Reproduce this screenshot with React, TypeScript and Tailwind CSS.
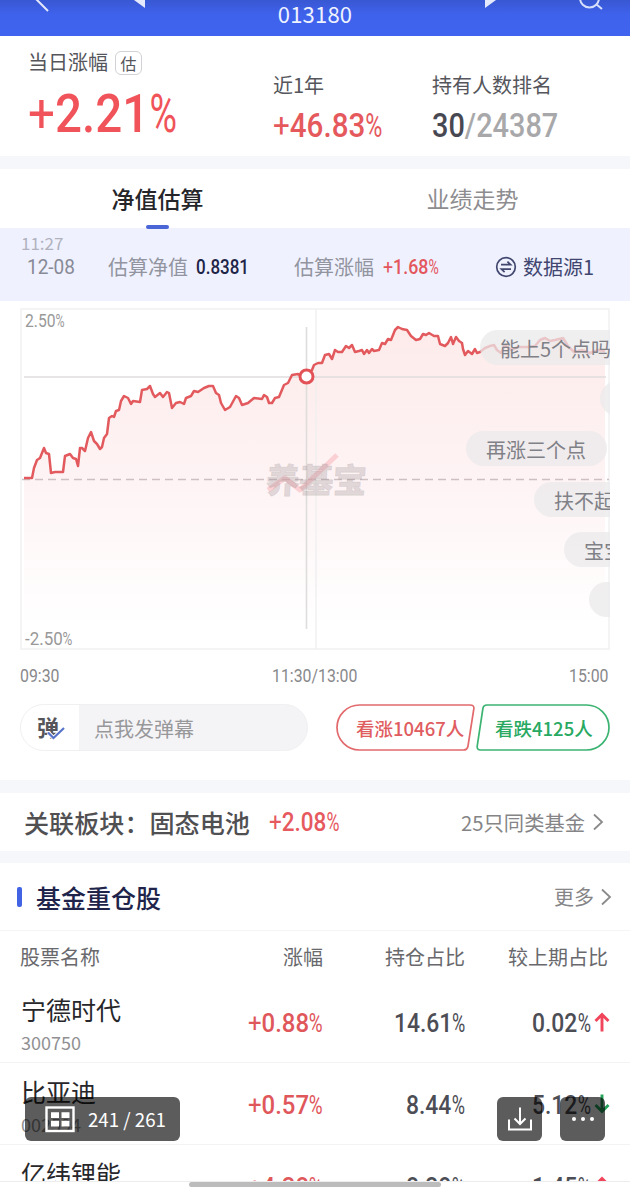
import React from "react";

const CJK = "font-['Noto_Sans_CJK_SC','Noto_Sans',sans-serif]";
const DIN = "font-[Roboto,'Noto_Sans_CJK_SC',sans-serif]";

/** Condensed figure: keeps a fixed box and squeezes the digits into it. */
function Num({ box, cls, children }: { box: string; cls: string; children: React.ReactNode }) {
  let body = children;
  if (typeof children === "string" && children.endsWith("%")) {
    const plus = children.startsWith("+");
    body = (
      <>
        {plus && <span className="font-normal">+</span>}
        {children.slice(plus ? 1 : 0, -1)}
        <span className="inline-block w-[0.58em] origin-left scale-x-[.79] font-normal">%</span>
      </>
    );
  }
  return (
    <span className={`block shrink-0 ${box}`}>
      <span className={`block w-max origin-left whitespace-nowrap leading-none ${DIN} ${cls}`}>{body}</span>
    </span>
  );
}

const LINE =
  "24,478 32,478 34,468 37,460 40,458 44,448 46,453 49,454 51,473 55,472 63,472 65,456 70,454 73,458 76,459 78,466 80,448 82,448 85,451 88,438 91,432 94,441 97,444 100,449 102,447 104,438 107,434 109,418 112,416 114,417 116,411 119,410 121,401 124,396 128,398 131,404 133,401 140,402 142,390 147,389 150,386 153,394 155,397 160,393 163,397 167,392 169,393 172,408 176,403 180,402 184,404 186,398 191,396 194,391 198,392 204,388 209,386 213,386 216,393 219,395 221,403 225,410 230,407 236,396 239,398 242,405 248,403 254,398 262,399 264,395 267,397 269,403 272,403 275,398 279,397 284,385 288,383 292,375 298,374 302,377 306,376 312,370 314,365 318,363 322,363 325,355 329,354 332,359 335,350 338,352 342,352 346,346 349,348 352,345 355,352 359,351 362,350 364,354 367,350 369,353 372,349 374,351 379,350 382,343 385,344 388,339 391,340 395,330 398,327 402,329 407,330 411,336 416,340 420,339 423,334 426,335 429,333 434,336 438,336 440,344 445,346 448,343 451,337 453,344 456,337 459,341 462,343 463,349 465,355 468,351 472,354 475,349 477,353 480,352 485,348 490,346 494,345 497,350 501,353 505,345 511,350 518,347 528,347 535,346 540,340 545,338 550,341 555,340 563,338 568,346 574,352 582,350 590,353 598,350 605,351";

function Chart() {
  return (
    <div className="relative mx-[20px] mt-[7px] h-[342px] overflow-hidden">
      <svg className="block h-full w-full" viewBox="20 308 590 342">
        <defs>
          <linearGradient id="area" x1="0" y1="325" x2="0" y2="625" gradientUnits="userSpaceOnUse">
            <stop offset="0" stopColor="#fdebea" />
            <stop offset="0.5" stopColor="#fef3f4" />
            <stop offset="1" stopColor="#ffffff" />
          </linearGradient>
        </defs>
        <polygon points={`24,649 ${LINE} 605,649`} fill="url(#area)" />
        <rect x="21" y="309" width="588" height="340" fill="none" stroke="#f2f2f3" strokeWidth="1.6" />
        <path d="M316 309V649" stroke="#efefef" strokeWidth="1.4" />
        <path d="M24 377H606" stroke="#dfdcdc" strokeWidth="1.3" />
        <path d="M306.5 327V629" stroke="#dfdcdc" strokeWidth="1.6" />
        <path d="M22 479.5H609" stroke="#cdbfc2" strokeWidth="1.3" strokeDasharray="8 5" />
        <polyline points={LINE} fill="none" stroke="#e25a5d" strokeWidth="2.5" strokeLinejoin="round" />
        <path d="M268 490L285 478L300 490L337 455" fill="none" stroke="#f8b5ba" strokeWidth="5" strokeLinejoin="round" opacity=".55" />
        <circle cx="306.5" cy="376.5" r="6.5" fill="#fff" stroke="#e25257" strokeWidth="3" />
      </svg>
      <Num box="absolute left-[5px] top-[4px] w-[40px]" cls="scale-x-[.87] text-[18px] text-[#999]">2.50%</Num>
      <Num box="absolute left-[5px] top-[322px] w-[48px]" cls="scale-x-[.94] text-[18px] text-[#999]">-2.50%</Num>
      <div className="absolute left-[246px] top-[151px] -skew-x-3 whitespace-nowrap text-[34px] font-black leading-[40px] tracking-[-0.5px] text-[#8a7f84]/25 [-webkit-text-stroke:1px_rgb(138_127_132/0.15)]">
        养基宝
      </div>
      <Pill cls="left-[460px] top-[22px] w-[160px]">能上5个点吗</Pill>
      <Pill cls="left-[580px] top-[73px] w-[80px]" />
      <Pill cls="left-[446px] top-[123px] w-[141px]">再涨三个点</Pill>
      <Pill cls="left-[514px] top-[174px] w-[141px]">扶不起</Pill>
      <Pill cls="left-[544px] top-[224px] w-[141px]">宝宝</Pill>
      <Pill cls="left-[569px] top-[274px] w-[141px]" />
    </div>
  );
}

function Pill({ cls, children }: { cls: string; children?: React.ReactNode }) {
  return (
    <div className={`absolute h-[35px] whitespace-nowrap rounded-full bg-[#ebe9eb]/75 pl-[20px] text-[20px] leading-[37px] text-[#808087] ${cls}`}>
      {children}
    </div>
  );
}

function Chevron() {
  return (
    <svg className="h-[18px] w-[12px]" viewBox="0 0 12 18" fill="none" stroke="#8a8a8a" strokeWidth="1.8">
      <path d="M2 1.5L10 9L2 16.5" />
    </svg>
  );
}

function Arrow({ up }: { up: boolean }) {
  return (
    <svg className="h-[20px] w-[16px]" viewBox="0 0 16 20" fill="none" stroke={up ? "#f0455a" : "#22a55b"} strokeWidth="2.9">
      <path d={up ? "M8 19.5V2.5M1.5 9L8 2.5L14.5 9" : "M8 .5V17.5M1.5 11L8 17.5L14.5 11"} />
    </svg>
  );
}

interface Stock {
  name: string;
  code: string;
  change: string;
  weight: string;
  weightBox: string;
  delta: string;
  up: boolean;
}

const STOCKS: Stock[] = [
  { name: "宁德时代", code: "300750", change: "+0.88%", weight: "14.61%", weightBox: "ml-[71px] w-[72px]", delta: "0.02%", up: true },
  { name: "比亚迪", code: "002594", change: "+0.57%", weight: "8.44%", weightBox: "ml-[83px] w-[60px]", delta: "5.12%", up: false },
  { name: "亿纬锂能", code: "300014", change: "+4.28%", weight: "8.28%", weightBox: "ml-[83px] w-[60px]", delta: "1.45%", up: true },
];

function StockRow({ s }: { s: Stock }) {
  return (
    <div className="flex h-[82px] items-start border-b border-[#f3f3f4] pl-[21px]">
      <div className="w-[227px] pt-[10px]">
        <div className="text-[25px] leading-[37px] text-[#27272b]">{s.name}</div>
        <div className="mt-px text-[18px] leading-[26px] text-[#909093]">{s.code}</div>
      </div>
      <div className="flex pt-[29px]">
        <Num box="w-[75px]" cls="scale-x-[.92] text-[26px] font-medium text-[#e0575b]">{s.change}</Num>
        <Num box={s.weightBox} cls="scale-x-[.88] text-[26px] font-medium text-[#4c4d55]">{s.weight}</Num>
        <Num box="ml-[66px] w-[62px]" cls="scale-x-[.88] text-[26px] font-medium text-[#4c4d55]">{s.delta}</Num>
        <div className="pt-[2px]"><Arrow up={s.up} /></div>
      </div>
    </div>
  );
}

export default function App() {
  return (
    <div className={`relative flex h-[1188px] w-[630px] flex-col overflow-hidden bg-white ${CJK}`}>
      <header className="relative flex h-[36px] shrink-0 items-start justify-center bg-linear-to-b from-[#3857d2] via-[#3f62ec] via-40% to-[#4064ef]">
        <svg className="absolute left-0 top-0 h-[36px] w-[630px]" viewBox="0 0 630 36" fill="none">
          <path d="M34-3L48 11" stroke="#e4e9fb" strokeWidth="2" />
          <path d="M134 0H145V8Z M485 0H496L485 8Z" fill="#e4e9fb" />
          <circle cx="589.5" cy="-2" r="9.5" stroke="#d5defa" strokeWidth="2" />
          <path d="M596 4L602 9" stroke="#d5defa" strokeWidth="2" />
        </svg>
        <span className="text-[22px] leading-[26px] tracking-[0.2px] text-[#eef2ff]">013180</span>
      </header>

      <section className="flex h-[120px] shrink-0 text-[20px] text-[#55565c]">
        <div className="w-[245px] pl-[28px] pt-[11px]">
          <div className="flex h-[30px] items-center">
            <span>当日涨幅</span>
            <span className="ml-[7px] mt-[2px] flex h-[24px] w-[27px] items-center justify-center rounded-[6px] border-[1.5px] border-[#d2d2d6] text-[16px]">估</span>
          </div>
          <Num box="mt-[10px] w-[148px]" cls="scale-x-[.88] text-[54px] font-medium text-[#f0545a]">+2.21%</Num>
        </div>
        <div className="w-[159px] pl-[28px] pt-[34px]">
          <div className="leading-[30px]">近1年</div>
          <Num box="mt-[8px] w-[109px]" cls="scale-x-[.87] text-[34px] font-medium text-[#e5595d]">+46.83%</Num>
        </div>
        <div className="pl-[28px] pt-[34px]">
          <div className="leading-[30px]">持有人数排名</div>
          <Num box="mt-[8px] w-[126px]" cls="scale-x-[.85] text-[34px] font-medium text-[#a8a8aa]">
            <span className="text-[#474852]">30</span>/24387
          </Num>
        </div>
      </section>

      <div className="h-[13px] shrink-0 bg-[#f6f7fa]" />

      <nav className="grid h-[59px] shrink-0 grid-cols-2 text-center text-[23px] leading-[58px]">
        <div className="relative font-medium text-[#26262a]">
          净值估算
          <span className="absolute bottom-[-1px] left-[146px] z-10 h-[4px] w-[23px] rounded-full bg-[#4a65d6]" />
        </div>
        <div className="text-[#8d8d90]">业绩走势</div>
      </nav>

      <section className="h-[73px] shrink-0 bg-[#eff1fe]">
        <div className="pl-[21px] pt-[4px] text-[17px] leading-[22px] text-[#b0b2bd]">11:27</div>
        <div className="mt-px flex h-[24px] items-center text-[20px] text-[#92949f]">
          <Num box="ml-[27px] w-[81px]" cls="scale-x-[.95] text-[20px] text-[#888a96]">12-08</Num>
          <span className="w-[88px]">估算净值</span>
          <Num box="w-[98px]" cls="scale-x-[.85] text-[20px] font-medium text-[#1e2447]">0.8381</Num>
          <span className="w-[89px]">估算涨幅</span>
          <Num box="w-[112px]" cls="scale-x-[.89] text-[20px] font-medium text-[#e4565d]">+1.68%</Num>
          <svg className="h-[22px] w-[22px]" viewBox="0 0 22 22" fill="none" stroke="#41476f" strokeWidth="1.7">
            <circle cx="11" cy="11" r="9.3" />
            <path d="M6 8.6H15.6L12.4 5.600M16 13.200H6.400L9.600 16.200" />
          </svg>
          <span className="ml-[6px] text-[#414670]">数据源1</span>
        </div>
      </section>

      <Chart />

      <div className="mx-[20px] mt-[17px] flex h-[19px] shrink-0 justify-between text-[#88888b]">
        <Num box="w-[41px]" cls="scale-x-[.88] text-[18px]">09:30</Num>
        <Num box="w-[86px]" cls="scale-x-[.88] text-[18px]">11:30/13:00</Num>
        <Num box="w-[41px]" cls="scale-x-[.88] text-[18px]">15:00</Num>
      </div>

      <section className="mt-[18px] flex h-[76px] shrink-0 items-start px-[20px]">
        <div className="flex h-[47px] w-[288px] overflow-hidden rounded-full border border-[#f0f0f2] bg-[#f4f4f6]">
          <div className="relative w-[58px] bg-white pl-[16px] text-[22px] font-bold leading-[43px] text-[#55555a]">
            弹
            <svg className="absolute left-[25px] top-[20px] h-[16px] w-[20px]" viewBox="0 0 20 16" fill="none">
              <path d="M2 7.5L7.5 13L18 3" stroke="#fff" strokeWidth="4" />
              <path d="M2 7.5L7.5 13L18 3" stroke="#5673c9" strokeWidth="2.2" />
            </svg>
          </div>
          <div className="pl-[15px] text-[20px] leading-[47px] text-[#98989b]">点我发弹幕</div>
        </div>
        <div className="relative ml-[28px] h-[47px] w-[139px] text-[18.5px] font-medium leading-[48px] text-[#df5c60]">
          <svg className="absolute inset-0 h-full w-full" viewBox="0 0 139 47" fill="none">
            <path d="M23.500 1H134Q138.500 1 137.800 5L132 42Q131.300 46 127.500 46H23.500A22.500 22.500 0 0 1 23.500 1Z" stroke="#e2696c" strokeWidth="1.7" />
          </svg>
          <span className="relative pl-[20px]">看涨10467人</span>
        </div>
        <div className="relative ml-px h-[47px] w-[134px] text-[18.5px] font-medium leading-[48px] text-[#27a962]">
          <svg className="absolute inset-0 h-full w-full" viewBox="0 0 134 47" fill="none">
            <path d="M110.500 1H11Q7.500 1 6.900 4.500L1.200 42Q.8 46 4.500 46H110.500A22.500 22.500 0 0 0 110.500 1Z" stroke="#3bb371" strokeWidth="1.7" />
          </svg>
          <span className="relative pl-[19px]">看跌4125人</span>
        </div>
      </section>

      <div className="h-[13px] shrink-0 bg-[#f6f7fb]" />

      <section className="flex h-[58px] shrink-0 items-center pl-[24px] pr-[26px]">
        <span className="mt-[2px] w-[245px] whitespace-nowrap text-[25.100px] font-medium text-[#505053]">关联板块：固态电池</span>
        <Num box="w-[70px]" cls="scale-x-[.9] text-[25px] font-medium text-[#e6595e]">+2.08%</Num>
        <span className="ml-auto mr-[7px] text-[20.3px] text-[#858587]">25只同类基金</span>
        <Chevron />
      </section>

      <div className="h-[12px] shrink-0 bg-[#f6f7fb]" />

      <section className="flex h-[68px] shrink-0 items-center border-b border-[#f5f5f6] pl-[17px] pr-[18px]">
        <span className="h-[20px] w-[5px] rounded-[2px] bg-[#4263e4]" />
        <span className="ml-[14px] mt-[2px] text-[25px] font-medium text-[#20244a]">基金重仓股</span>
        <span className="ml-auto mr-[6px] mt-px text-[20px] text-[#858587]">更多</span>
        <Chevron />
      </section>

      <div className="flex h-[50px] shrink-0 items-center pl-[20px] text-[20px] leading-[50px] text-[#69696d]">
        <span className="mt-[2px] w-[222px]">股票名称</span>
        <span className="mt-[2px] w-[81px] text-right">涨幅</span>
        <span className="mt-[2px] w-[142px] text-right">持仓占比</span>
        <span className="mt-[2px] w-[143px] text-right">较上期占比</span>
      </div>

      <div className="h-[200px] shrink-0 overflow-hidden">
        {STOCKS.map((s) => (
          <StockRow key={s.code} s={s} />
        ))}
      </div>
      <footer className="relative h-[7px] shrink-0 border-t border-[#ededee] bg-white pl-[189px]">
        <div className="h-[5px] w-[252px] rounded-full bg-[#bcbcbc]" />
      </footer>

      <div className="absolute left-[25px] top-[1097px] flex h-[44px] w-[155px] items-center rounded-[6px] bg-black/64 pl-[20px] text-white">
        <svg className="h-[27px] w-[30px]" viewBox="0 0 30 27" fill="none" stroke="#fff">
          <rect x="1.500" y="1.500" width="27" height="23.500" strokeWidth="2.400" />
          <path d="M6 6.200H14V12H6ZM16.500 6.200H24.500V12H16.500ZM6 14.800H14V20.500H6ZM16.500 14.800H24.500V20.500H16.500Z" fill="#fff" stroke="none" />
        </svg>
        <span className="ml-[13px] mt-px whitespace-nowrap text-[18.7px]">241 / 261</span>
      </div>
      <div className="absolute left-[497px] top-[1097px] flex h-[44px] w-[45px] items-center justify-center rounded-[6px] bg-black/64">
        <svg className="h-[26px] w-[26px]" viewBox="0 0 26 26" fill="none" stroke="#fff" strokeWidth="2">
          <path d="M13 1.500V17.500M7.500 12.500L13 18L18.500 12.500M2 13.500V23.500H24V13.500" />
        </svg>
      </div>
      <div className="absolute left-[560px] top-[1097px] flex h-[44px] w-[45px] items-center justify-center gap-[5px] rounded-[6px] bg-black/64">
        <i className="h-[4px] w-[4px] rounded-full bg-white" />
        <i className="h-[4px] w-[4px] rounded-full bg-white" />
        <i className="h-[4px] w-[4px] rounded-full bg-white" />
      </div>
    </div>
  );
}
